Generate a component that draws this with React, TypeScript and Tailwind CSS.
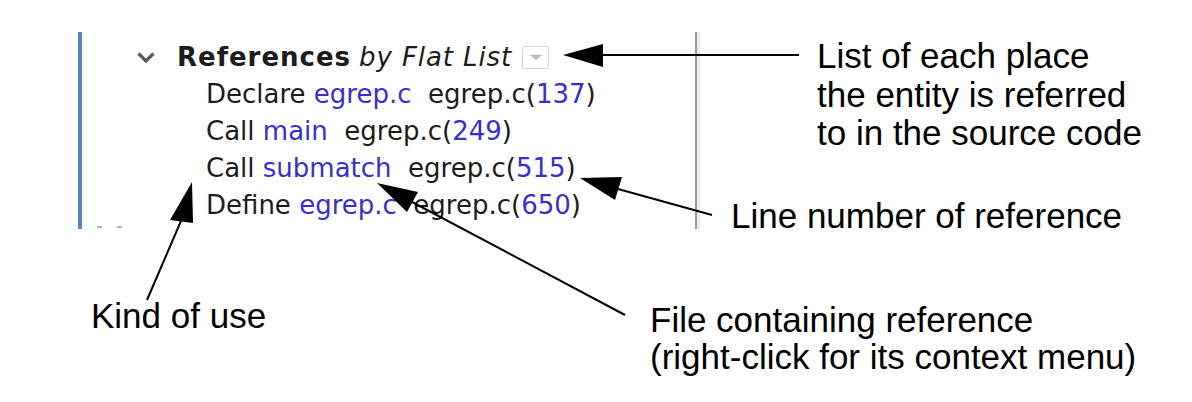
import React from 'react';

type Ref = { kind: string; target: string; line: string };

const refs: Ref[] = [
    { kind: 'Declare', target: 'egrep.c', line: '137' },
    { kind: 'Call', target: 'main', line: '249' },
    { kind: 'Call', target: 'submatch', line: '515' },
    { kind: 'Define', target: 'egrep.c', line: '650' },
];

const uiFont = { fontFamily: '"DejaVu Sans", Verdana, sans-serif' };
const noteFont = { fontFamily: '"Liberation Sans", Arial, sans-serif' };

function Arrows() {
    return (
        <svg className="absolute inset-0 pointer-events-none" width="1192" height="402" viewBox="0 0 1192 402">
            <g stroke="#000" strokeWidth="2" fill="none">
                <line x1="603" y1="55" x2="799" y2="55" />
                <line x1="618" y1="189" x2="712" y2="215" />
                <line x1="412" y1="202" x2="625" y2="315" />
                <line x1="181" y1="221" x2="147" y2="300" />
            </g>
            <g fill="#000">
                <polygon points="563,55 603,44 603,67" />
                <polygon points="580,178 622,177 615,200" />
                <polygon points="377,183 418,192 407,212" />
                <polygon points="192,182 170,220 193,223" />
            </g>
        </svg>
    );
}

export default function App() {
    return (
        <div className="relative w-[1192px] h-[402px] bg-white overflow-hidden text-black">
            {/* captured panel */}
            <div className="flex pl-[78px] pt-[32px]">
                <div className="w-[4px] h-[197px] bg-[#4f86c3]" />
                <div className="w-[613px] h-[197px] flex flex-col pt-[7px] text-[26px] leading-[37px] text-[#1c1c1c]" style={uiFont}>
                    <div className="flex items-center">
                        <svg className="ml-[55px] mr-[22px]" width="18" height="11" viewBox="0 0 18 11">
                            <polyline points="1.5,1.5 9,9 16.5,1.5" fill="none" stroke="#5a5a5a" strokeWidth="3.2" />
                        </svg>
                        <span className="font-bold tracking-[1px]">References</span>
                        <span className="italic ml-[8px] tracking-[0.9px]">by Flat List</span>
                        <span className="ml-[10px] w-[27px] h-[23px] border border-[#d6d6d6] rounded-[2px] flex items-center justify-center">
                            <span className="w-0 h-0 border-l-[6px] border-r-[6px] border-t-[5px] border-l-transparent border-r-transparent border-t-[#b5b5b5]" />
                        </span>
                    </div>
                    {refs.map((r, i) => (
                        <div key={i} className="pl-[124px] whitespace-pre">
                            {r.kind} <span className="text-[#3b2fcc]">{r.target}</span>  egrep.c(<span className="text-[#3b2fcc]">{r.line}</span>)
                        </div>
                    ))}
                    <div className="mt-auto flex gap-[15px] pl-[15px] pb-[1px]">
                        <span className="w-[5px] h-[2px] bg-[#b0b0b0]" />
                        <span className="w-[5px] h-[2px] bg-[#b0b0b0]" />
                    </div>
                </div>
                <div className="w-[2px] h-[197px] bg-[#9a9a9a]" />
                <div className="w-[3px] h-[197px] bg-[#ececec]" />
            </div>

            {/* callouts */}
            <div className="absolute left-[817px] top-[37px] text-[35px] leading-[38.5px]" style={noteFont}>
                <div>List of each place</div>
                <div>the entity is referred</div>
                <div>to in the source code</div>
            </div>
            <div className="absolute left-[731px] top-[197px] text-[35px] leading-[38.5px]" style={noteFont}>
                Line number of reference
            </div>
            <div className="absolute left-[91px] top-[297px] text-[35px] leading-[38.5px]" style={noteFont}>
                Kind of use
            </div>
            <div className="absolute left-[650px] top-[301px] text-[35px] leading-[37px]" style={noteFont}>
                <div>File containing reference</div>
                <div>(right-click for its context menu)</div>
            </div>

            <Arrows />
        </div>
    );
}
